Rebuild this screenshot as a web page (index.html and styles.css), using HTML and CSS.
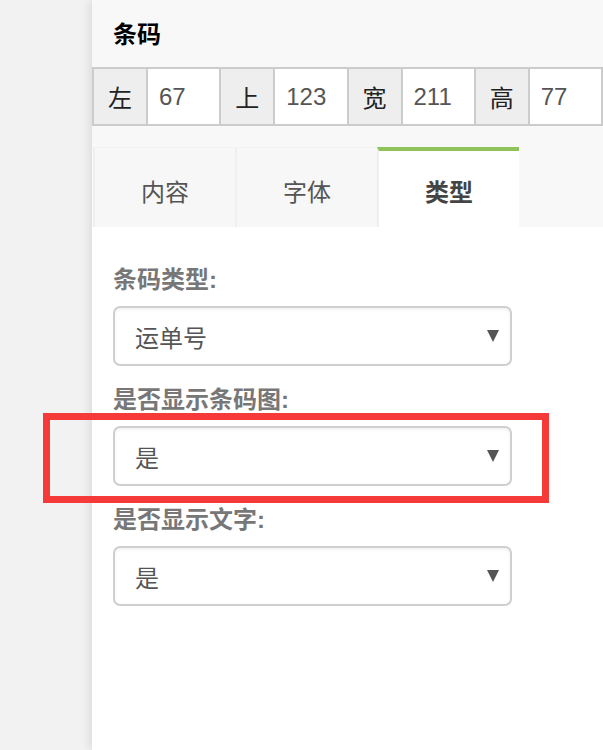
FILE: index.html
```html
<!DOCTYPE html>
<html lang="zh">
<head>
<meta charset="utf-8">
<title>条码</title>
<link rel="stylesheet" href="styles.css">
</head>
<body>
<div class="page">
  <div class="side"></div>
  <div class="panel">
    <div class="head">条码</div>
    <div class="pos">
      <div class="pos-label">左</div><div class="pos-input">67</div>
      <div class="pos-label">上</div><div class="pos-input">123</div>
      <div class="pos-label">宽</div><div class="pos-input">211</div>
      <div class="pos-label">高</div><div class="pos-input">77</div>
    </div>
    <div class="tabs">
      <div class="tab">内容</div>
      <div class="tab">字体</div>
      <div class="tab active">类型</div>
    </div>
    <div class="content">
      <div class="group">
        <div class="label">条码类型:</div>
        <div class="select"><span>运单号</span><i class="caret"></i></div>
      </div>
      <div class="group">
        <div class="label">是否显示条码图:</div>
        <div class="select"><span>是</span><i class="caret"></i></div>
      </div>
      <div class="group">
        <div class="label">是否显示文字:</div>
        <div class="select"><span>是</span><i class="caret"></i></div>
      </div>
    </div>
  </div>
  <div class="highlight"></div>
</div>
</body>
</html>
```
FILE: styles.css
```css
html, body {
  margin: 0;
  padding: 0;
}
body {
  background: #f2f2f2;
  font-family: "Liberation Sans", "Noto Sans CJK SC", sans-serif;
}
.page {
  position: relative;
  display: flex;
  width: 603px;
  height: 750px;
  overflow: hidden;
}
.side {
  width: 92px;
  flex: none;
  background: #f2f2f2;
}
.panel {
  flex: 1;
  display: flex;
  flex-direction: column;
  background: #ffffff;
  box-shadow: -3px 0 9px rgba(0, 0, 0, 0.09);
  position: relative;
}
.head {
  height: 67px;
  box-sizing: border-box;
  padding: 0 0 3px 21px;
  display: flex;
  align-items: center;
  background: #f8f8f8;
  font-size: 24px;
  font-weight: bold;
  color: #000;
}
.pos {
  display: flex;
  height: 59px;
  box-sizing: border-box;
  border: 2px solid #cccccc;
  background: #f8f8f8;
}
.pos-label, .pos-input {
  display: flex;
  align-items: center;
  font-size: 24px;
  border-right: 2px solid #cccccc;
}
.pos-label {
  width: 52px;
  flex: none;
  justify-content: center;
  background: #eeeeee;
  color: #222;
}
.pos-input {
  flex: 1;
  background: #fff;
  color: #555;
  padding-left: 11px;
}
.pos-input:last-child {
  border-right: none;
}
.tabs {
  display: flex;
  background: #f8f8f8;
  padding: 21px 0 0 1px;
}
.tab {
  width: 142px;
  height: 80px;
  box-sizing: border-box;
  border-left: 2px solid #efefef;
  border-top: 1px solid #f2f2f2;
  background: #f7f7f7;
  display: flex;
  align-items: center;
  justify-content: center;
  padding-top: 6px;
  font-size: 24px;
  color: #555;
}
.tab.active {
  background: #fff;
  border-top: 4px solid #8fc45a;
  padding-top: 2px;
  font-weight: bold;
  color: #444;
}
.content {
  flex: 1;
  padding: 36px 0 0 21px;
  display: flex;
  flex-direction: column;
  gap: 17px;
}
.label {
  height: 34px;
  line-height: 34px;
  margin-bottom: 9px;
  font-size: 24px;
  font-weight: bold;
  color: #777;
}
.select {
  width: 399px;
  height: 60px;
  box-sizing: border-box;
  border: 2px solid #cfcfcf;
  border-radius: 7px;
  background: #fff;
  box-shadow: inset 0 2px 3px rgba(0, 0, 0, 0.05);
  display: flex;
  align-items: center;
  padding: 0 11px 0 20px;
  font-size: 24px;
  color: #555;
}
.caret {
  margin-left: auto;
  width: 0;
  height: 0;
  border-left: 6px solid transparent;
  border-right: 6px solid transparent;
  border-top: 12px solid #555;
}
.highlight {
  position: absolute;
  left: 43px;
  top: 413px;
  width: 506px;
  height: 90px;
  box-sizing: border-box;
  border: 7px solid #f63a3a;
}
```
